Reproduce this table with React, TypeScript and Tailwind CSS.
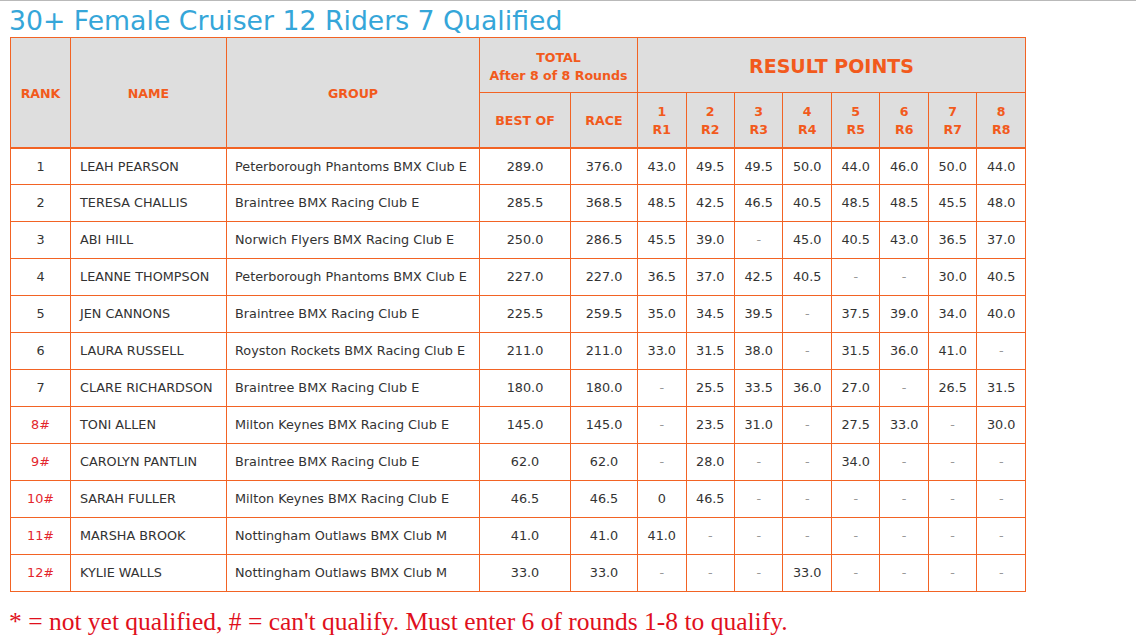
import React from 'react';

type Row = {
  rank: string;
  name: string;
  group: string;
  best: string;
  race: string;
  rounds: string[];
  noQual?: boolean;
};

const rows: Row[] = [
  { rank: '1', name: 'LEAH PEARSON', group: 'Peterborough Phantoms BMX Club E', best: '289.0', race: '376.0', rounds: ['43.0', '49.5', '49.5', '50.0', '44.0', '46.0', '50.0', '44.0'] },
  { rank: '2', name: 'TERESA CHALLIS', group: 'Braintree BMX Racing Club E', best: '285.5', race: '368.5', rounds: ['48.5', '42.5', '46.5', '40.5', '48.5', '48.5', '45.5', '48.0'] },
  { rank: '3', name: 'ABI HILL', group: 'Norwich Flyers BMX Racing Club E', best: '250.0', race: '286.5', rounds: ['45.5', '39.0', '-', '45.0', '40.5', '43.0', '36.5', '37.0'] },
  { rank: '4', name: 'LEANNE THOMPSON', group: 'Peterborough Phantoms BMX Club E', best: '227.0', race: '227.0', rounds: ['36.5', '37.0', '42.5', '40.5', '-', '-', '30.0', '40.5'] },
  { rank: '5', name: 'JEN CANNONS', group: 'Braintree BMX Racing Club E', best: '225.5', race: '259.5', rounds: ['35.0', '34.5', '39.5', '-', '37.5', '39.0', '34.0', '40.0'] },
  { rank: '6', name: 'LAURA RUSSELL', group: 'Royston Rockets BMX Racing Club E', best: '211.0', race: '211.0', rounds: ['33.0', '31.5', '38.0', '-', '31.5', '36.0', '41.0', '-'] },
  { rank: '7', name: 'CLARE RICHARDSON', group: 'Braintree BMX Racing Club E', best: '180.0', race: '180.0', rounds: ['-', '25.5', '33.5', '36.0', '27.0', '-', '26.5', '31.5'] },
  { rank: '8#', name: 'TONI ALLEN', group: 'Milton Keynes BMX Racing Club E', best: '145.0', race: '145.0', rounds: ['-', '23.5', '31.0', '-', '27.5', '33.0', '-', '30.0'], noQual: true },
  { rank: '9#', name: 'CAROLYN PANTLIN', group: 'Braintree BMX Racing Club E', best: '62.0', race: '62.0', rounds: ['-', '28.0', '-', '-', '34.0', '-', '-', '-'], noQual: true },
  { rank: '10#', name: 'SARAH FULLER', group: 'Milton Keynes BMX Racing Club E', best: '46.5', race: '46.5', rounds: ['0', '46.5', '-', '-', '-', '-', '-', '-'], noQual: true },
  { rank: '11#', name: 'MARSHA BROOK', group: 'Nottingham Outlaws BMX Club M', best: '41.0', race: '41.0', rounds: ['41.0', '-', '-', '-', '-', '-', '-', '-'], noQual: true },
  { rank: '12#', name: 'KYLIE WALLS', group: 'Nottingham Outlaws BMX Club M', best: '33.0', race: '33.0', rounds: ['-', '-', '-', '33.0', '-', '-', '-', '-'], noQual: true },
];

const th = 'border border-[#f26324] bg-[#dedede] text-[#f25a1c] font-bold text-[12.6px] text-center align-middle';
const td = 'border border-[#f26324] text-[12.8px] text-[#333] h-[37px] align-middle';

export default function App() {
  return (
    <div className="w-[1136px] h-[640px] bg-white border-t border-[#b9b9b9] font-['Verdana','DejaVu_Sans',sans-serif] overflow-hidden">
      <h1 className="pl-[9px] pt-[4px] h-[36px] text-[26.7px] leading-[32px] text-[#35a6d9] font-normal">
        30+ Female Cruiser 12 Riders 7 Qualified
      </h1>
      <table className="ml-[10px] w-[1016px] table-fixed border-collapse border border-[#ee8a66]">
        <colgroup>
          <col className="w-[60px]" />
          <col className="w-[156px]" />
          <col className="w-[253px]" />
          <col className="w-[91px]" />
          <col className="w-[67px]" />
          {Array.from({ length: 8 }).map((_, i) => (
            <col key={i} />
          ))}
        </colgroup>
        <thead>
          <tr className="h-[55px]">
            <th rowSpan={2} className={th + ' border-b-2 pt-[4px]'}>RANK</th>
            <th rowSpan={2} className={th + ' border-b-2 pt-[4px]'}>NAME</th>
            <th rowSpan={2} className={th + ' border-b-2 pt-[4px]'}>GROUP</th>
            <th colSpan={2} className={th + ' leading-[18px] pt-[4px]'}>
              TOTAL
              <br />
              After 8 of 8 Rounds
            </th>
            <th colSpan={8} className={th + ' text-[19px] pt-[2px]'}>RESULT POINTS</th>
          </tr>
          <tr className="h-[55px]">
            <th className={th + ' border-b-2 pt-[3px]'}>BEST OF</th>
            <th className={th + ' border-b-2 pt-[3px]'}>RACE</th>
            {[1, 2, 3, 4, 5, 6, 7, 8].map((n) => (
              <th key={n} className={th + ' border-b-2 leading-[18px] pt-[3px]'}>
                {n}
                <br />R{n}
              </th>
            ))}
          </tr>
        </thead>
        <tbody>
          {rows.map((r) => (
            <tr key={r.rank}>
              <td className={td + ' text-center ' + (r.noQual ? 'text-[#e3262d]' : '')}>{r.rank}</td>
              <td className={td + ' pl-[9px]'}>{r.name}</td>
              <td className={td + ' pl-[8px]'}>{r.group}</td>
              <td className={td + ' text-center'}>{r.best}</td>
              <td className={td + ' text-center'}>{r.race}</td>
              {r.rounds.map((v, i) => (
                <td key={i} className={td + ' text-center ' + (v === '-' ? 'text-[#999]' : '')}>
                  {v}
                </td>
              ))}
            </tr>
          ))}
        </tbody>
      </table>
      <p className="pl-[9px] pt-[15px] font-['Liberation_Serif','Times_New_Roman',serif] text-[25.5px] leading-[30px] text-[#e0101c]">
        * = not yet qualified, # = can't qualify. Must enter 6 of rounds 1-8 to qualify.
      </p>
    </div>
  );
}
